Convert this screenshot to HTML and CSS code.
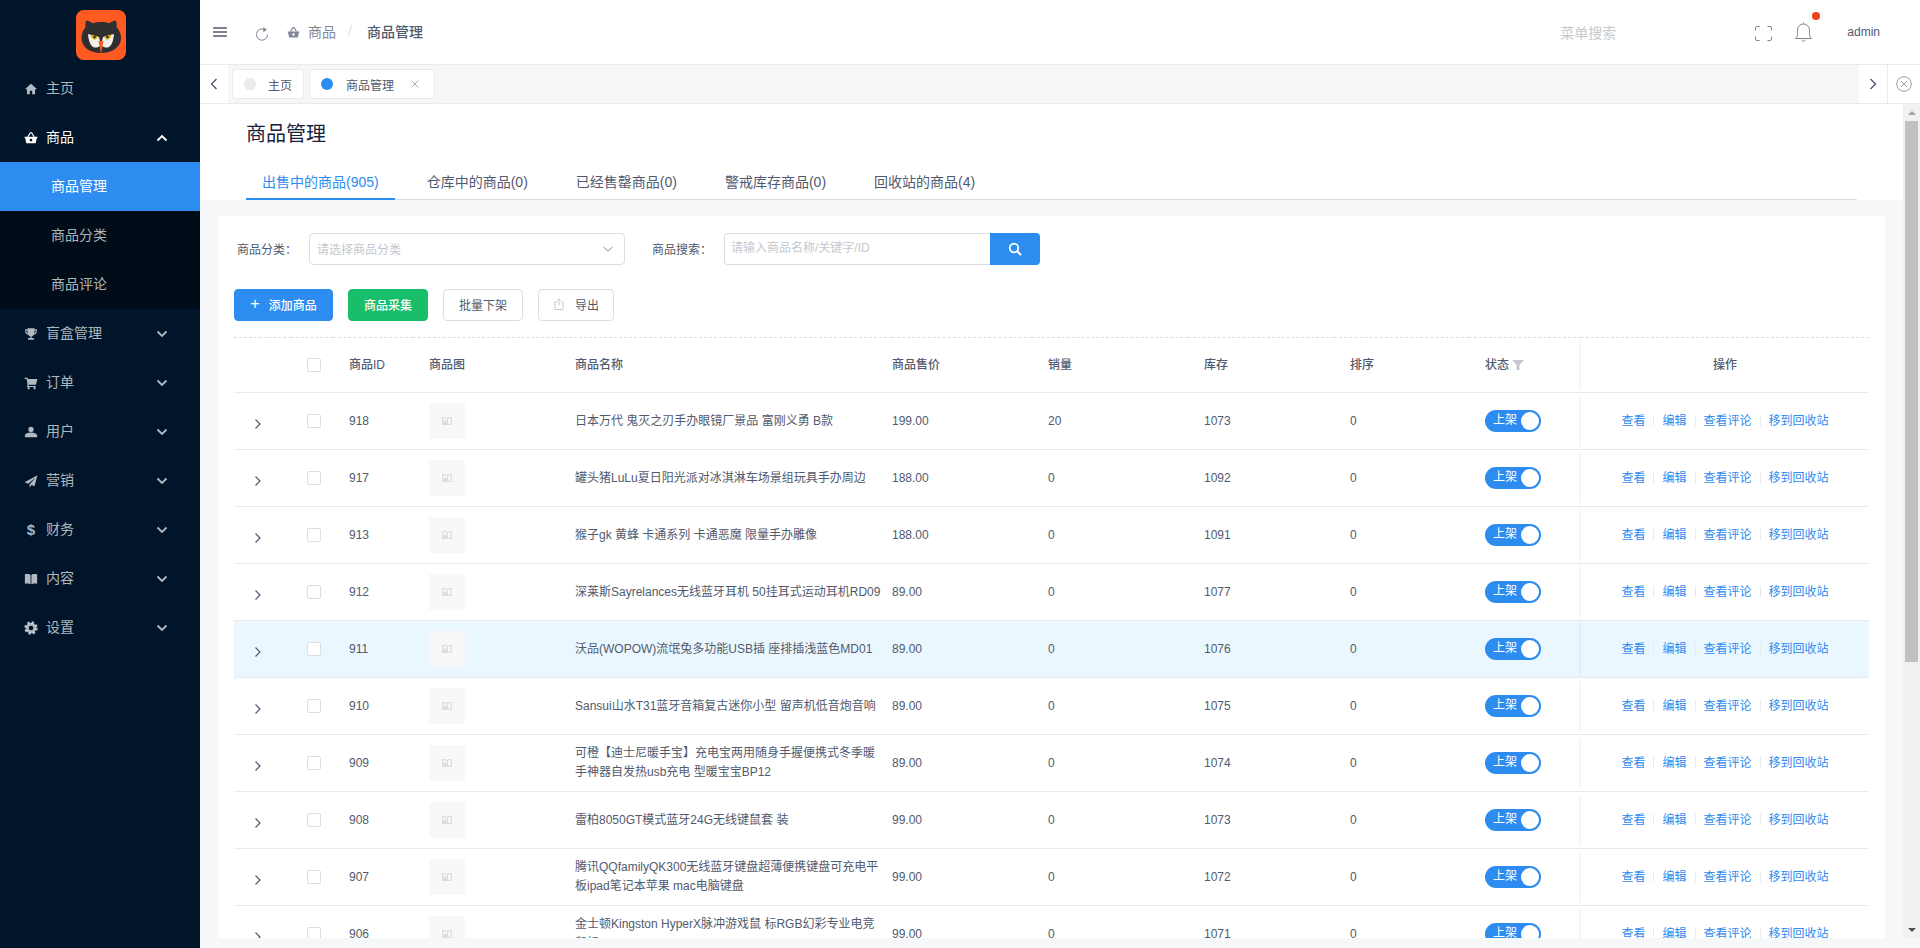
FILE: index.html
```html
<!DOCTYPE html>
<html lang="zh-CN">
<head>
    <meta charset="UTF-8">
    <title>商品管理</title>
    <link rel="stylesheet" href="styles.css">
</head>
<body>

<svg class="sprites" width="0" height="0">
    <symbol id="i-down" viewBox="0 0 12 8"><path d="M1.5 1.5 6 6l4.500-4.500" fill="none" stroke="currentColor" stroke-width="1.800"/></symbol>
    <symbol id="i-up" viewBox="0 0 12 8"><path d="M1.5 6.500 6 2l4.500 4.500" fill="none" stroke="currentColor" stroke-width="1.800"/></symbol>
    <symbol id="i-thin" viewBox="0 0 12 8"><path d="M1.500 2 6 6l4.500-4" fill="none" stroke="currentColor" stroke-width="1"/></symbol>
    <symbol id="i-expand" viewBox="0 0 8 12"><path d="M1.500 1.500 6 6l-4.500 4.500" fill="none" stroke="currentColor" stroke-width="1.200"/></symbol>
    <symbol id="i-basket" viewBox="0 0 24 24"><path fill-rule="evenodd" d="M1 10h22v2h-1l-2 9H4l-2-9H1zm11 3.200a2.300 2.300 0 1 0 0 4.600a2.300 2.300 0 0 0 0-4.600z"/><path d="M6.500 10 11 3h2l4.500 7" fill="none" stroke="currentColor" stroke-width="2"/></symbol>
    <symbol id="i-pic" viewBox="0 0 12 12"><path fill-rule="evenodd" d="M1 2h4l1 1 1-1h4v8H1zm1.200 1.200v3.800L4.500 5 6 6.500V4L5 3.200zM7 3.200v5.500h2.800V3.200z"/></symbol>
</svg>

<aside class="sidebar">
    <div class="logo">
        <svg width="50" height="50" viewBox="0 0 50 50">
            <rect width="50" height="50" rx="8" fill="#ff5a22"/>
            <path d="M11 10.500C13 11 15 12.500 17 13.200 21 11.700 29 11.700 33 13.200 35 12.500 37 11 39 10.500 40.500 10.500 41 14 40.500 17 43.500 20 45 24 45 28 45 37 36 43 25 43 14 43 5.500 37 5.500 28 5.500 24 7 20 9.500 17 9 14 9.500 10.500 11 10.500z" fill="#2f2f31"/>
            <path d="M12 24 23 27C24 31 24.500 33 25 35 22 38 19 38 17 37 14 35 12.500 30 12 24z" fill="#f1efe9"/>
            <path d="M38 24 27 27C26 31 25.500 33 25 35 28 38 31 38 33 37 36 35 37.500 30 38 24z" fill="#f1efe9"/>
            <path d="M14.500 24.500 21.500 26.500C21.500 29 19.500 30 18 29.500 16 29 15 27 14.500 24.500z" fill="#e3ad14"/>
            <path d="M35.500 24.500 28.500 26.500C28.500 29 30.500 30 32 29.500 34 29 35 27 35.500 24.500z" fill="#e3ad14"/>
            <circle cx="18.500" cy="27" r="1.200" fill="#222"/>
            <circle cx="31.500" cy="27" r="1.200" fill="#222"/>
            <path d="M22.500 31h5L25 44z" fill="#ff5a22"/>
        </svg>
    </div>
    <nav class="menu">
        <a class="menu-item">
            <svg class="menu-icon" viewBox="0 0 24 24"><path d="M12 3 1.500 12.500H5V21h5v-6h4v6h5v-8.500h3.500z"/></svg>
            <span>主页</span>
        </a>
        <a class="menu-item open">
            <svg class="menu-icon"><use href="#i-basket"/></svg>
            <span>商品</span>
            <svg class="menu-arrow"><use href="#i-up"/></svg>
        </a>
        <div class="submenu">
            <a class="sub-item active">商品管理</a>
            <a class="sub-item">商品分类</a>
            <a class="sub-item">商品评论</a>
        </div>
        <a class="menu-item">
            <svg class="menu-icon" viewBox="0 0 24 24"><path fill-rule="evenodd" d="M6 2h12v2h4v3c0 3.500-2 6-5.500 6.500-.8 1.500-2 2.500-3.500 2.800V19h4v3H7v-3h4v-2.700c-1.500-.3-2.700-1.300-3.500-2.800C4 13 2 10.500 2 7V4h4zM4 6v1c0 2 1 3.500 2.500 4.200C6.200 10 6 8 6 6zm16 0h-2c0 2-.2 4-.5 5.200C19 10.500 20 9 20 7z"/></svg>
            <span>盲盒管理</span>
            <svg class="menu-arrow"><use href="#i-down"/></svg>
        </a>
        <a class="menu-item">
            <svg class="menu-icon" viewBox="0 0 24 24"><path d="M1 3h5l.7 2H23l-2.500 10H8l-.4 2H20v2H5l1-5L4.500 5H1z"/><circle cx="8" cy="21" r="2"/><circle cx="18" cy="21" r="2"/></svg>
            <span>订单</span>
            <svg class="menu-arrow"><use href="#i-down"/></svg>
        </a>
        <a class="menu-item">
            <svg class="menu-icon" viewBox="0 0 24 24"><circle cx="12" cy="7.500" r="4.500"/><path d="M1.500 21v-2.500c0-3.500 6-5.500 10.500-5.500s10.500 2 10.500 5.500V21z"/></svg>
            <span>用户</span>
            <svg class="menu-arrow"><use href="#i-down"/></svg>
        </a>
        <a class="menu-item">
            <svg class="menu-icon" viewBox="0 0 24 24"><path d="M23 2 1 14l6 2.500L20 6 9.500 18v5l3.500-4 5 2z"/></svg>
            <span>营销</span>
            <svg class="menu-arrow"><use href="#i-down"/></svg>
        </a>
        <a class="menu-item">
            <span class="menu-icon dollar">$</span>
            <span>财务</span>
            <svg class="menu-arrow"><use href="#i-down"/></svg>
        </a>
        <a class="menu-item">
            <svg class="menu-icon" viewBox="0 0 24 24"><path d="M1.500 4C5 3 9.500 3 11.300 5v16C9.500 19.500 5 19.300 1.500 20zM22.500 4C19 3 14.500 3 12.700 5v16c1.800-1.500 6.300-1.700 9.800-1z"/></svg>
            <span>内容</span>
            <svg class="menu-arrow"><use href="#i-down"/></svg>
        </a>
        <a class="menu-item">
            <svg class="menu-icon" viewBox="0 0 24 24"><circle cx="12" cy="12" r="6.500" fill="none" stroke="currentColor" stroke-width="5"/><circle cx="12" cy="12" r="9.800" fill="none" stroke="currentColor" stroke-width="3.400" stroke-dasharray="4.200 3.500"/></svg>
            <span>设置</span>
            <svg class="menu-arrow"><use href="#i-down"/></svg>
        </a>
    </nav>
</aside>

<main class="main">
    <header class="topbar">
        <svg class="bar-icon burger" viewBox="0 0 14 10"><path d="M0 1h14M0 5h14M0 9h14" stroke="currentColor" stroke-width="1.300"/></svg>
        <svg class="bar-icon refresh" viewBox="0 0 14 14"><path d="M10.500 3.200A5.600 5.600 0 1 0 12.600 7.500" fill="none" stroke="currentColor" stroke-width="1"/><path d="M8.300 0v5.200l3.500-2.400z" fill="currentColor"/></svg>
        <svg class="bar-icon crumb-icon"><use href="#i-basket"/></svg>
        <span class="crumb">商品</span>
        <span class="crumb-sep">/</span>
        <span class="crumb-current">商品管理</span>
        <span class="menu-search">菜单搜索</span>
        <svg class="bar-icon full" viewBox="0 0 17 15"><path d="M.5 4.500V2A1.500 1.500 0 0 1 2 .5h2.500M12.500.5H15A1.500 1.500 0 0 1 16.500 2v2.500M16.500 10.500V13a1.500 1.500 0 0 1-1.500 1.500h-2.500M4.500 14.500H2A1.500 1.500 0 0 1 .5 13v-2.500" fill="none" stroke="currentColor"/></svg>
        <span class="bell">
            <svg class="bar-icon" viewBox="0 0 17 20"><path d="M.5 16.500c1.500-1 2-2.500 2-5V8a6 6 0 0 1 12 0v3.500c0 2.500.5 4 2 5zM8.500 2V.5M6.500 18l2 1.500 2-1.500" fill="none" stroke="currentColor"/></svg>
            <i class="bell-dot"></i>
        </span>
        <span class="user">admin</span>
    </header>

    <div class="tabstrip">
        <button class="strip-btn">
            <svg class="strip-arrow" viewBox="0 0 8 12"><path d="M6.500 1 1.500 6l5 5" fill="none" stroke="currentColor" stroke-width="1.400"/></svg>
        </button>
        <div class="strip-tabs">
            <div class="page-tab"><i class="tab-dot"></i>主页</div>
            <div class="page-tab current"><i class="tab-dot"></i>商品管理
                <svg class="tab-close" viewBox="0 0 8 8"><path d="M.5.500l7 7M7.500.500l-7 7" stroke="currentColor" stroke-width=".8"/></svg>
            </div>
        </div>
        <button class="strip-btn">
            <svg class="strip-arrow" viewBox="0 0 8 12"><path d="M1.500 1l5 5-5 5" fill="none" stroke="currentColor" stroke-width="1.400"/></svg>
        </button>
        <button class="strip-btn strip-close">
            <svg width="16" height="16" viewBox="0 0 16 16"><circle cx="8" cy="8" r="7.300" fill="none" stroke="currentColor" stroke-width=".8"/><path d="M5 5l6 6M11 5l-6 6" stroke="currentColor" stroke-width=".8"/></svg>
        </button>
    </div>

    <div class="content">
        <div class="scroller">
            <section class="page-head">
                <h1>商品管理</h1>
                <div class="tabs">
                    <a class="tab active">出售中的商品(905)</a>
                    <a class="tab">仓库中的商品(0)</a>
                    <a class="tab">已经售罄商品(0)</a>
                    <a class="tab">警戒库存商品(0)</a>
                    <a class="tab">回收站的商品(4)</a>
                </div>
            </section>

            <section class="card">
                <div class="filters">
                    <label class="filter-label">商品分类：</label>
                    <div class="select">
                        <span>请选择商品分类</span>
                        <svg class="select-arrow"><use href="#i-thin"/></svg>
                    </div>
                    <label class="filter-label search-label">商品搜索：</label>
                    <div class="search">
                        <span class="search-input">请输入商品名称/关键字/ID</span>
                        <button class="search-btn">
                            <svg width="14" height="14" viewBox="0 0 14 14"><circle cx="6" cy="6" r="4.300" fill="none" stroke="#fff" stroke-width="1.700"/><path d="M9 9l4 4" stroke="#fff" stroke-width="1.900"/></svg>
                        </button>
                    </div>
                </div>

                <div class="actions">
                    <button class="btn primary"><span class="plus">+</span>添加商品</button>
                    <button class="btn success">商品采集</button>
                    <button class="btn">批量下架</button>
                    <button class="btn export">
                        <svg width="12" height="12" viewBox="0 0 12 12"><path d="M4 4H2v7.500h8V4H8M6 7.500V1M4.300 2.500 6 .8l1.700 1.700" fill="none" stroke="#c5c8ce"/></svg>
                        导出
                    </button>
                </div>

                <table class="goods">
                    <colgroup>
                        <col class="c-expand"><col class="c-check"><col class="c-id"><col class="c-pic"><col class="c-name">
                        <col class="c-price"><col class="c-sales"><col class="c-stock"><col class="c-sort"><col class="c-status"><col class="c-ops">
                    </colgroup>
                    <thead>
                        <tr>
                            <th></th>
                            <th><i class="check"></i></th>
                            <th>商品ID</th>
                            <th>商品图</th>
                            <th>商品名称</th>
                            <th>商品售价</th>
                            <th>销量</th>
                            <th>库存</th>
                            <th>排序</th>
                            <th>状态 <svg class="funnel" viewBox="0 0 12 10"><path d="M0 0h12L7.500 5v5h-3V5z"/></svg></th>
                            <th class="ops">操作</th>
                        </tr>
                    </thead>
                    <tbody>
                        <tr>
                            <td><svg class="expand"><use href="#i-expand"/></svg></td><td><i class="check"></i></td><td>918</td>
                            <td><div class="pic"><svg><use href="#i-pic"/></svg></div></td>
                            <td class="name">日本万代 鬼灭之刃手办眼镜厂景品 富刚义勇 B款</td>
                            <td>199.00</td><td>20</td><td>1073</td><td>0</td>
                            <td><span class="switch">上架</span></td>
                            <td class="ops"><a>查看</a><i></i><a>编辑</a><i></i><a>查看评论</a><i></i><a>移到回收站</a></td>
                        </tr>
                        <tr>
                            <td><svg class="expand"><use href="#i-expand"/></svg></td><td><i class="check"></i></td><td>917</td>
                            <td><div class="pic"><svg><use href="#i-pic"/></svg></div></td>
                            <td class="name">罐头猪LuLu夏日阳光派对冰淇淋车场景组玩具手办周边</td>
                            <td>188.00</td><td>0</td><td>1092</td><td>0</td>
                            <td><span class="switch">上架</span></td>
                            <td class="ops"><a>查看</a><i></i><a>编辑</a><i></i><a>查看评论</a><i></i><a>移到回收站</a></td>
                        </tr>
                        <tr>
                            <td><svg class="expand"><use href="#i-expand"/></svg></td><td><i class="check"></i></td><td>913</td>
                            <td><div class="pic"><svg><use href="#i-pic"/></svg></div></td>
                            <td class="name">猴子gk 黄蜂 卡通系列 卡通恶魔 限量手办雕像</td>
                            <td>188.00</td><td>0</td><td>1091</td><td>0</td>
                            <td><span class="switch">上架</span></td>
                            <td class="ops"><a>查看</a><i></i><a>编辑</a><i></i><a>查看评论</a><i></i><a>移到回收站</a></td>
                        </tr>
                        <tr>
                            <td><svg class="expand"><use href="#i-expand"/></svg></td><td><i class="check"></i></td><td>912</td>
                            <td><div class="pic"><svg><use href="#i-pic"/></svg></div></td>
                            <td class="name">深莱斯Sayrelances无线蓝牙耳机 50挂耳式运动耳机RD09</td>
                            <td>89.00</td><td>0</td><td>1077</td><td>0</td>
                            <td><span class="switch">上架</span></td>
                            <td class="ops"><a>查看</a><i></i><a>编辑</a><i></i><a>查看评论</a><i></i><a>移到回收站</a></td>
                        </tr>
                        <tr class="hovered">
                            <td><svg class="expand"><use href="#i-expand"/></svg></td><td><i class="check"></i></td><td>911</td>
                            <td><div class="pic"><svg><use href="#i-pic"/></svg></div></td>
                            <td class="name">沃品(WOPOW)流氓兔多功能USB插 座排插浅蓝色MD01</td>
                            <td>89.00</td><td>0</td><td>1076</td><td>0</td>
                            <td><span class="switch">上架</span></td>
                            <td class="ops"><a>查看</a><i></i><a>编辑</a><i></i><a>查看评论</a><i></i><a>移到回收站</a></td>
                        </tr>
                        <tr>
                            <td><svg class="expand"><use href="#i-expand"/></svg></td><td><i class="check"></i></td><td>910</td>
                            <td><div class="pic"><svg><use href="#i-pic"/></svg></div></td>
                            <td class="name">Sansui山水T31蓝牙音箱复古迷你小型 留声机低音炮音响</td>
                            <td>89.00</td><td>0</td><td>1075</td><td>0</td>
                            <td><span class="switch">上架</span></td>
                            <td class="ops"><a>查看</a><i></i><a>编辑</a><i></i><a>查看评论</a><i></i><a>移到回收站</a></td>
                        </tr>
                        <tr>
                            <td><svg class="expand"><use href="#i-expand"/></svg></td><td><i class="check"></i></td><td>909</td>
                            <td><div class="pic"><svg><use href="#i-pic"/></svg></div></td>
                            <td class="name">可橙【迪士尼暖手宝】充电宝两用随身手握便携式冬季暖手神器自发热usb充电 型暖宝宝BP12</td>
                            <td>89.00</td><td>0</td><td>1074</td><td>0</td>
                            <td><span class="switch">上架</span></td>
                            <td class="ops"><a>查看</a><i></i><a>编辑</a><i></i><a>查看评论</a><i></i><a>移到回收站</a></td>
                        </tr>
                        <tr>
                            <td><svg class="expand"><use href="#i-expand"/></svg></td><td><i class="check"></i></td><td>908</td>
                            <td><div class="pic"><svg><use href="#i-pic"/></svg></div></td>
                            <td class="name">雷柏8050GT模式蓝牙24G无线键鼠套 装</td>
                            <td>99.00</td><td>0</td><td>1073</td><td>0</td>
                            <td><span class="switch">上架</span></td>
                            <td class="ops"><a>查看</a><i></i><a>编辑</a><i></i><a>查看评论</a><i></i><a>移到回收站</a></td>
                        </tr>
                        <tr>
                            <td><svg class="expand"><use href="#i-expand"/></svg></td><td><i class="check"></i></td><td>907</td>
                            <td><div class="pic"><svg><use href="#i-pic"/></svg></div></td>
                            <td class="name">腾讯QQfamilyQK300无线蓝牙键盘超薄便携键盘可充电平板ipad笔记本苹果 mac电脑键盘</td>
                            <td>99.00</td><td>0</td><td>1072</td><td>0</td>
                            <td><span class="switch">上架</span></td>
                            <td class="ops"><a>查看</a><i></i><a>编辑</a><i></i><a>查看评论</a><i></i><a>移到回收站</a></td>
                        </tr>
                        <tr>
                            <td><svg class="expand"><use href="#i-expand"/></svg></td><td><i class="check"></i></td><td>906</td>
                            <td><div class="pic"><svg><use href="#i-pic"/></svg></div></td>
                            <td class="name">金士顿Kingston HyperX脉冲游戏鼠 标RGB幻彩专业电竞鼠标</td>
                            <td>99.00</td><td>0</td><td>1071</td><td>0</td>
                            <td><span class="switch">上架</span></td>
                            <td class="ops"><a>查看</a><i></i><a>编辑</a><i></i><a>查看评论</a><i></i><a>移到回收站</a></td>
                        </tr>
                    </tbody>
                </table>
            </section>
        </div>
        <div class="scrollbar">
            <i class="sb-up"></i>
            <i class="sb-thumb"></i>
            <i class="sb-down"></i>
        </div>
    </div>
    <div class="bottom-gap"></div>
</main>

</body>
</html>
```

FILE: styles.css
```css
* {
    box-sizing: border-box;
}
body {
    margin: 0;
    height: 100vh;
    display: flex;
    overflow: hidden;
    font-family: "Liberation Sans", "Noto Sans CJK SC", sans-serif;
    font-size: 12px;
    color: #515a6e;
    background-color: #f5f7f9;
}
.sprites {
    position: absolute;
}
button {
    font-family: inherit;
}

/* sidebar */
.sidebar {
    width: 200px;
    flex-shrink: 0;
    background-color: #001529;
    color: rgba(255, 255, 255, 0.7);
    font-size: 14px;
}
.logo {
    height: 64px;
    display: flex;
    justify-content: center;
    padding: 10px 0 0 2px;
}
.menu-item {
    height: 49px;
    display: flex;
    align-items: center;
    padding-left: 24px;
}
.menu-item > span {
    margin-bottom: 4px;
}
.menu-item.open {
    color: #fff;
}
.menu-icon {
    width: 14px;
    height: 14px;
    margin-right: 8px;
    fill: currentColor;
}
.menu-item > .dollar {
    margin-bottom: 0;
    font-weight: 700;
    font-size: 15px;
    line-height: 14px;
    text-align: center;
}
.menu-arrow {
    width: 12px;
    height: 8px;
    margin-left: auto;
    margin-right: 32px;
}
.submenu {
    background-color: #000c17;
}
.sub-item {
    height: 49px;
    display: flex;
    align-items: center;
    padding: 0 0 3px 51px;
}
.sub-item.active {
    background-color: #2d8cf0;
    color: #fff;
}

/* top bar */
.main {
    flex: 1;
    min-width: 0;
    display: flex;
    flex-direction: column;
}
.topbar {
    height: 64px;
    flex-shrink: 0;
    display: flex;
    align-items: center;
    background-color: #fff;
    padding-left: 13px;
    color: #515a6e;
}
.bar-icon {
    color: #808695;
}
.burger {
    width: 14px;
    height: 10px;
    margin-right: 28px;
    color: #515a6e;
}
.refresh {
    width: 14px;
    height: 14px;
    margin-right: 18px;
    margin-top: 3px;
}
.crumb-icon {
    width: 13px;
    height: 13px;
    fill: #808695;
    margin-right: 8px;
    margin-top: 1px;
}
.crumb {
    font-size: 14px;
    color: #808695;
    margin-bottom: 2px;
}
.crumb-sep {
    margin: 0 15px 2px 12px;
    font-size: 14px;
    color: #dcdee2;
}
.crumb-current {
    font-size: 14px;
    font-weight: 500;
    margin-bottom: 2px;
}
.menu-search {
    margin-left: auto;
    font-size: 14px;
    color: #c5c8ce;
    margin-right: 139px;
}
.full {
    width: 17px;
    height: 15px;
    margin-right: 23px;
    margin-top: 2px;
}
.bell {
    position: relative;
    display: flex;
    margin-right: 35px;
}
.bell svg {
    width: 17px;
    height: 20px;
}
.bell-dot {
    position: absolute;
    top: -10px;
    right: -8px;
    width: 8px;
    height: 8px;
    border-radius: 50%;
    background-color: #ed4014;
}
.user {
    margin-right: 40px;
}

/* page tabs */
.tabstrip {
    height: 40px;
    flex-shrink: 0;
    display: flex;
    background-color: #fff;
    border-top: 1px solid #e8eaec;
    border-bottom: 1px solid #e8eaec;
}
.strip-btn {
    width: 28px;
    padding: 0;
    border: 0;
    background-color: #fff;
    display: flex;
    align-items: center;
    justify-content: center;
    color: #515a6e;
}
.strip-arrow {
    width: 8px;
    height: 12px;
}
.strip-close {
    width: 33px;
    border-left: 1px solid #e8eaec;
    color: #808695;
}
.strip-tabs {
    flex: 1;
    display: flex;
    gap: 5px;
    padding: 4px 0 0 4px;
    background-color: #f5f7f9;
}
.page-tab {
    height: 30px;
    display: flex;
    align-items: center;
    padding-left: 11px;
    width: 72px;
    white-space: nowrap;
    background-color: #fff;
    border: 1px solid #e8eaec;
    border-radius: 2px;
}
.page-tab.current {
    width: 126px;
}
.tab-dot {
    width: 12px;
    height: 12px;
    border-radius: 50%;
    background-color: #e8eaec;
    margin-right: 12px;
    flex-shrink: 0;
}
.current .tab-dot {
    background-color: #2d8cf0;
    margin-right: 13px;
}
.tab-close {
    width: 8px;
    height: 8px;
    margin-left: 17px;
    color: #999;
}

/* scrolling area */
.content {
    flex: 1;
    min-height: 0;
    display: flex;
}
.scroller {
    flex: 1;
    min-width: 0;
    overflow: hidden;
}
.scrollbar {
    width: 17px;
    flex-shrink: 0;
    display: flex;
    flex-direction: column;
    align-items: center;
    background-color: #f1f1f1;
}
.sb-up,
.sb-down {
    height: 17px;
    display: flex;
    align-items: center;
    justify-content: center;
}
.sb-up::before {
    content: "";
    border: 4px solid transparent;
    border-top: 0;
    border-bottom-color: #a3a3a3;
}
.sb-down {
    margin-top: auto;
}
.sb-down::before {
    content: "";
    border: 4px solid transparent;
    border-bottom: 0;
    border-top-color: #505050;
}
.sb-thumb {
    width: 13px;
    height: 541px;
    background-color: #c1c1c1;
}
.bottom-gap {
    height: 10px;
    flex-shrink: 0;
}
.page-head {
    height: 96px;
    background-color: #fff;
    padding: 0 46px;
}
.page-head h1 {
    margin: 0;
    padding-top: 16px;
    font-size: 20px;
    line-height: 28px;
    font-weight: 400;
    color: #17233d;
}
.tabs {
    display: flex;
    gap: 16px;
    margin-top: 16px;
    height: 36px;
    border-bottom: 1px solid #dcdee2;
    font-size: 14px;
}
.tab {
    height: 36px;
    padding: 8px 16px 0;
    line-height: 20px;
}
.tab.active {
    color: #2d8cf0;
    border-bottom: 2px solid #2d8cf0;
}

/* card */
.card {
    margin: 16px 18px;
    padding: 17px 16px 0;
    background-color: #fff;
    border-radius: 4px;
}
.filters {
    display: flex;
    align-items: center;
    height: 32px;
}
.filter-label {
    margin-left: 3px;
    width: 72px;
    padding-bottom: 2px;
}
.search-label {
    margin-left: 27px;
}
.select {
    width: 316px;
    height: 32px;
    display: flex;
    align-items: center;
    justify-content: space-between;
    padding: 0 10px 2px 7px;
    border: 1px solid #dcdee2;
    border-radius: 4px;
    color: #c5c8ce;
}
.select-arrow {
    width: 12px;
    height: 8px;
    margin-top: 2px;
    color: #808695;
}
.search {
    display: flex;
    width: 316px;
    height: 32px;
}
.search-input {
    flex: 1;
    padding: 0 6px;
    line-height: 28px;
    border: 1px solid #dcdee2;
    border-right: 0;
    border-radius: 4px 0 0 4px;
    color: #c5c8ce;
}
.search-btn {
    width: 50px;
    border: 0;
    padding: 0;
    border-radius: 0 4px 4px 0;
    background-color: #2d8cf0;
    display: flex;
    align-items: center;
    justify-content: center;
}
.actions {
    display: flex;
    gap: 15px;
    margin-top: 24px;
}
.btn {
    height: 32px;
    width: 80px;
    display: flex;
    align-items: center;
    justify-content: center;
    padding: 0 0 2px;
    font-size: 12px;
    color: #515a6e;
    background-color: #fff;
    border: 1px solid #dcdee2;
    border-radius: 4px;
}
.btn.primary {
    width: 99px;
    color: #fff;
    font-weight: 500;
    background-color: #2d8cf0;
    border-color: #2d8cf0;
}
.btn.success {
    color: #fff;
    font-weight: 500;
    background-color: #19be6b;
    border-color: #19be6b;
}
.btn.export {
    width: 76px;
    gap: 10px;
}
.plus {
    font-size: 16px;
    font-weight: 400;
    margin-right: 9px;
}

/* table */
.goods {
    width: 1635px;
    margin-top: 16px;
    table-layout: fixed;
    border-collapse: collapse;
    border-top: 1px dashed #dcdee2;
}
.c-expand { width: 57px; }
.c-check { width: 42px; }
.c-id { width: 80px; }
.c-pic { width: 146px; }
.c-name { width: 333px; }
.c-price { width: 140px; }
.c-sales { width: 156px; }
.c-stock { width: 146px; }
.c-sort { width: 135px; }
.c-status { width: 112px; }
.c-ops { width: 288px; }
.goods th,
.goods td {
    height: 57px;
    padding: 0 0 0 16px;
    border-bottom: 1px solid #e8eaec;
    text-align: left;
    font-weight: 400;
    line-height: 19px;
}
.goods th {
    height: 55px;
    font-weight: 500;
}
.goods th:nth-child(6),
.goods td:nth-child(6) {
    padding-left: 0;
}
.goods th.ops,
.goods td.ops {
    padding: 0;
    text-align: center;
    box-shadow: -3px 0 4px -3px rgba(0, 0, 0, 0.12);
}
.goods td.name {
    padding-right: 8px;
}
.hovered td {
    background-color: #ebf7ff;
}
.expand {
    width: 8px;
    height: 12px;
    display: block;
    margin: 5px 0 0 4px;
    color: #515a6e;
}
.check {
    display: block;
    width: 14px;
    height: 14px;
    background-color: #fff;
    border: 1px solid #dcdee2;
    border-radius: 2px;
}
.pic {
    width: 36px;
    height: 36px;
    background-color: #f8f8f9;
    display: flex;
    align-items: center;
    justify-content: center;
}
.pic svg {
    width: 12px;
    height: 12px;
    fill: #dcdee2;
}
.funnel {
    width: 12px;
    height: 10px;
    fill: #c5c8ce;
    vertical-align: -1px;
}
.switch {
    position: relative;
    display: block;
    width: 56px;
    height: 22px;
    padding-left: 8px;
    line-height: 21px;
    color: #fff;
    background-color: #2d8cf0;
    border-radius: 11px;
}
.switch::after {
    content: "";
    position: absolute;
    top: 2px;
    right: 2px;
    width: 18px;
    height: 18px;
    border-radius: 50%;
    background-color: #fff;
}
.ops a {
    color: #2d8cf0;
}
.ops i {
    display: inline-block;
    width: 1px;
    height: 11px;
    margin: 0 8px;
    background-color: #e8eaec;
    vertical-align: -1px;
}
```
